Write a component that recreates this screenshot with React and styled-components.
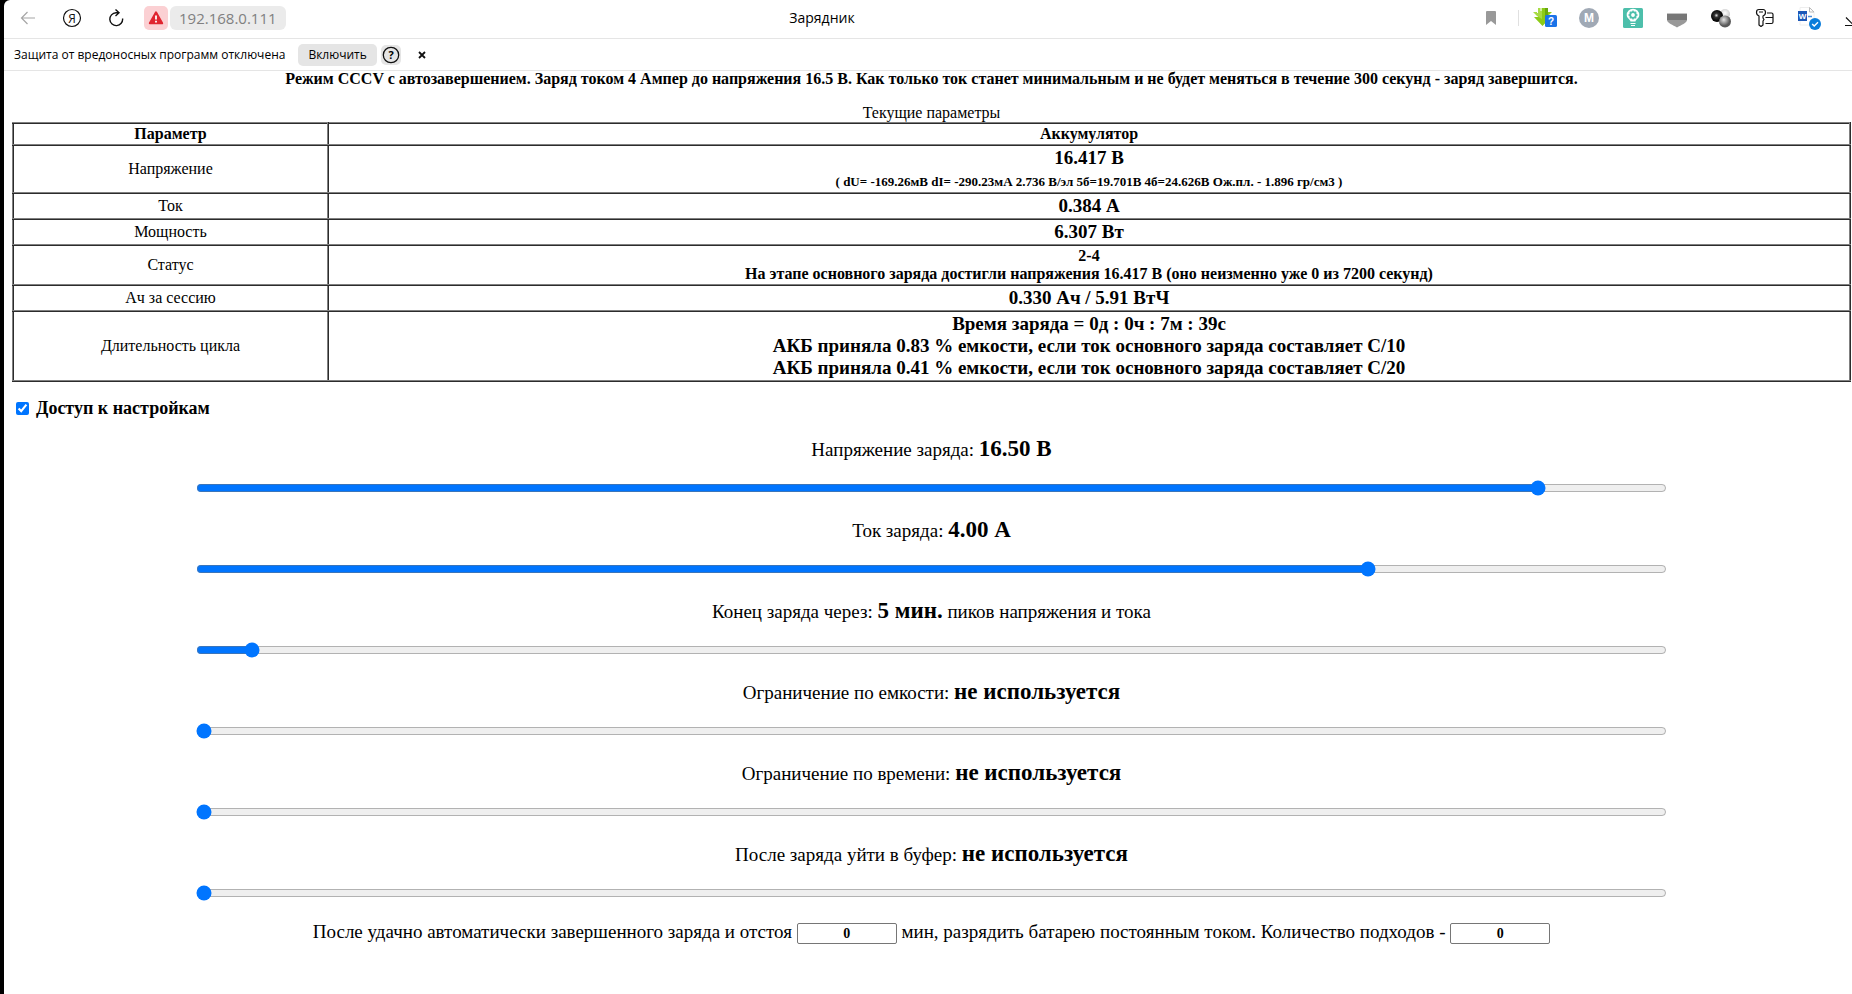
import React, { useState } from "react";
import styled, { createGlobalStyle } from "styled-components";

const GlobalStyle = createGlobalStyle`
  * {
    box-sizing: border-box;
  }

  body {
    margin: 0;
    background: #fff;
    color: #000;
    font-family: "Liberation Serif", "Times New Roman", serif;
    font-size: 16px;
    line-height: 18px;
    overflow-x: hidden;
  }
`;

const Window = styled.div`
  min-height: 100vh;
  padding-left: 4px;
  background: #000;
`;

const Browser = styled.div`
  min-height: 100vh;
  background: #fff;
  border-top-left-radius: 6px;
  overflow: hidden;
`;

const Toolbar = styled.header`
  display: grid;
  grid-template-columns: 1fr auto 1fr;
  align-items: center;
  height: 39px;
  padding-bottom: 2px;
  border-bottom: 1px solid #e5e5e5;
  font-family: "Open Sans", "Noto Sans", sans-serif;
`;

const NavGroup = styled.nav`
  display: flex;
  align-items: center;
  padding-left: 14px;
`;

const IconButton = styled.button`
  display: flex;
  align-items: center;
  justify-content: center;
  width: 20px;
  height: 20px;
  margin-right: ${({ $gap }) => $gap || 0}px;
  padding: 0;
  border: 0;
  background: none;

  svg {
    flex-shrink: 0;
  }
`;

const WarningButton = styled(IconButton)`
  width: 24px;
  height: 24px;
  margin-right: 2px;
  border-radius: 5px;
  background: #fbd0d3;
`;

const Address = styled.a`
  height: 24px;
  padding: 0 9px;
  border-radius: 6px;
  background: #ebebeb;
  color: #808080;
  font-size: 15px;
  line-height: 24px;
  text-decoration: none;
`;

const PageTitle = styled.div`
  padding-right: 212px;
  font-size: 14px;
  line-height: 20px;
`;

const Extensions = styled.div`
  display: flex;
  align-items: center;
  justify-content: flex-end;
  gap: 20px;
  margin-right: -15px;
`;

const Separator = styled.span`
  width: 1px;
  height: 16px;
  margin: 0 -4px 0 -3px;
  background: #e0e0e0;
`;

const Notice = styled.div`
  display: flex;
  align-items: center;
  height: 32px;
  padding-left: 10px;
  border-bottom: 1px solid #e5e5e5;
  font-family: "Open Sans", "Noto Sans", sans-serif;
  font-size: 12px;
`;

const EnableButton = styled.button`
  height: 22px;
  margin: 0 4px 0 13px;
  padding: 0 10px;
  border: 0;
  border-radius: 5px;
  background: #e5e5e5;
  font: inherit;
`;

const HelpButton = styled(IconButton)`
  border-radius: 5px;
  background: #e5e5e5;
`;

const Page = styled.main`
  padding: 0 1px 0 8px;
`;

const Mode = styled.h1`
  margin: 0 0 17px;
  font-size: 16px;
  font-weight: bold;
  line-height: 16px;
  text-align: center;
`;

const Table = styled.table`
  width: 100%;
  border-collapse: collapse;
  table-layout: fixed;
  text-align: center;

  th,
  td {
    padding: 1px;
    border: 2px inset gray;
  }

  th:first-child {
    width: 315px;
  }
`;

const Big = styled.div`
  font-size: 19px;
  font-weight: bold;
  line-height: 22px;
`;

const Small = styled.div`
  padding-top: 4px;
  font-size: 13px;
  font-weight: bold;
  line-height: 18px;
`;

const Access = styled.label`
  display: flex;
  align-items: center;
  gap: 7px;
  margin: 16px 0 17px 4px;
  font-size: 18px;
  font-weight: bold;
  line-height: 20px;

  input {
    width: 13px;
    height: 13px;
    margin: 0;
  }
`;

const Setting = styled.div`
  display: flex;
  flex-direction: column;
  align-items: center;
  height: 81px;
  font-size: 19px;

  label {
    line-height: 28px;
  }

  b {
    font-size: 23px;
  }
`;

const Slider = styled.input`
  width: 80%;
  height: 16px;
  margin: 16px 2px 0;
`;

const Discharge = styled.div`
  font-size: 19px;
  line-height: 22px;
  text-align: center;
`;

const NumberField = styled.input`
  width: 100px;
  height: 21px;
  padding: 0;
  border: 1px solid #767676;
  border-radius: 2px;
  font-family: inherit;
  font-size: 14px;
  font-weight: bold;
  text-align: center;
  vertical-align: middle;
`;

const ArrowLeft = () => (
  <svg width="16" height="14" viewBox="0 0 16 14" fill="none" stroke="#a6a6a6" strokeWidth="1.2">
    <path d="M15 7H1.5M7.5 1L1.5 7L7.5 13" />
  </svg>
);

const YandexIcon = () => (
  <svg width="20" height="20" viewBox="0 0 20 20">
    <circle cx="10" cy="10" r="8.5" fill="none" stroke="#111" strokeWidth="1.2" />
    <text
      x="10"
      y="14.5"
      textAnchor="middle"
      fontFamily="Open Sans, sans-serif"
      fontSize="12"
      fill="#111"
    >
      Я
    </text>
  </svg>
);

const Reload = () => (
  <svg width="18" height="18" viewBox="0 0 18 18" fill="none" stroke="#111" strokeWidth="1.4">
    <path d="M11.5 3.8H9A6.4 6.4 0 1 0 15.6 9.5M8.5 0.5L12 3.8L8.5 7" />
  </svg>
);

const Warning = () => (
  <svg width="16" height="16" viewBox="0 0 16 16">
    <path
      d="M8 2.3L14.2 13.3H1.8Z"
      fill="#e0242f"
      stroke="#e0242f"
      strokeWidth="2"
      strokeLinejoin="round"
    />
    <path d="M8 5.5V9.5M8 10.8V12.6" stroke="#fff" strokeWidth="1.8" />
  </svg>
);

const Help = () => (
  <svg width="18" height="18" viewBox="0 0 18 18">
    <circle cx="9" cy="9" r="7.7" fill="none" stroke="#111" strokeWidth="1.3" />
    <text
      x="9"
      y="13"
      textAnchor="middle"
      fontFamily="Open Sans, sans-serif"
      fontSize="11"
      fontWeight="bold"
    >
      ?
    </text>
  </svg>
);

const Close = () => (
  <svg width="8" height="8" viewBox="0 0 8 8" stroke="#111" strokeWidth="1.8">
    <path d="M1 1L7 7M7 1L1 7" />
  </svg>
);

const Bookmark = () => (
  <svg width="10" height="14" viewBox="0 0 10 14">
    <path d="M0 1Q0 0 1 0H9Q10 0 10 1V14L5 10L0 14Z" fill="#999" />
  </svg>
);

const Downloader = () => (
  <svg width="24" height="20" viewBox="0 0 24 20">
    <path d="M5 0H15V9H18L9.5 18L1 9H5Z" fill="#8ccb17" />
    <path d="M0 4H5V0H9V11L4 8Z" fill="#a8db45" />
    <path d="M12 0H15V8L12 13Z" fill="#68a80d" />
    <path d="M15 4H19L15 8Z" fill="#8ccb17" />
    <path d="M4.5 0V5M8 0V3" stroke="#fff" />
    <rect x="12" y="7" width="12" height="12" rx="1.5" fill="#1a73e8" />
    <text
      x="18"
      y="16.5"
      textAnchor="middle"
      fontFamily="Liberation Sans, sans-serif"
      fontSize="10"
      fontWeight="bold"
      fill="#fff"
    >
      ?
    </text>
  </svg>
);

const Mail = () => (
  <svg width="20" height="20" viewBox="0 0 20 20">
    <circle cx="10" cy="10" r="10" fill="#a0a9b5" />
    <text
      x="10"
      y="14"
      textAnchor="middle"
      fontFamily="Liberation Sans, sans-serif"
      fontSize="12"
      fontWeight="bold"
      fill="#fff"
    >
      M
    </text>
  </svg>
);

const Bulb = () => (
  <svg width="20" height="20" viewBox="0 0 20 20" fill="none" stroke="#fff">
    <rect width="20" height="20" rx="1.5" fill="#4dbfab" stroke="none" />
    <path
      d="M7.5 13.5C7.5 11.5 3.7 10.5 3.7 7A6.3 6.3 0 0 1 16.3 7C16.3 10.5 12.5 11.5 12.5 13.5Z"
      fill="#fff"
      stroke="none"
    />
    <circle cx="10" cy="7" r="2.8" stroke="#4dbfab" strokeWidth="1.8" />
    <path d="M10 2.5V4.5M10 9.5V11.5M5.5 7H7.5M12.5 7H14.5M6.8 3.8L8.3 5.3M13.2 3.8L11.7 5.3M6.8 10.2L8.3 8.7M13.2 10.2L11.7 8.7" stroke="#4dbfab" strokeWidth="1.3" />
    <path d="M7.5 15.5H12.5M8 17.5H12" strokeWidth="1.2" />
  </svg>
);

const Pocket = () => (
  <svg width="20" height="20" viewBox="0 0 20 20">
    <path d="M0 5H20V8H0Z" fill="#c4c4c4" />
    <path d="M0 6H20V12H0Z" fill="#777" />
    <path d="M0 12H20C20 15 14 17 10 19.5C6 17 0 15 0 12Z" fill="#999" />
  </svg>
);

const Spheres = () => (
  <svg width="20" height="20" viewBox="0 0 20 20">
    <defs>
      <radialGradient id="dark" cx="0.45" cy="0.45">
        <stop offset="0" stopColor="#ddd" />
        <stop offset="0.35" stopColor="#333" />
        <stop offset="1" stopColor="#000" />
      </radialGradient>
      <radialGradient id="gray" cx="0.4" cy="0.35">
        <stop offset="0" stopColor="#e6e6e6" />
        <stop offset="1" stopColor="#5a5a5a" />
      </radialGradient>
      <radialGradient id="pale" cx="0.5" cy="0.4">
        <stop offset="0" stopColor="#fff" />
        <stop offset="1" stopColor="#ccc" />
      </radialGradient>
    </defs>
    <circle cx="14" cy="6" r="5" fill="url(#pale)" />
    <circle cx="6" cy="8" r="6" fill="url(#dark)" />
    <circle cx="14" cy="13.5" r="6" fill="url(#gray)" />
  </svg>
);

const Passwords = () => (
  <svg
    width="20"
    height="20"
    viewBox="0 0 20 20"
    fill="none"
    stroke="#111"
    strokeWidth="1.2"
    strokeLinejoin="round"
  >
    <path d="M4 8Q1.5 7 1.5 4.5Q1.5 1.5 4 1.5H8Q10.5 1.5 10.5 4.5Q10.5 7 8 8V10L9 11.5L8 13V17L6 18.5L4 17ZM4 4H8" />
    <path d="M12 5H16.5Q18 5 18 6.5V14Q18 15.5 16.5 15.5H10.5M10.5 9.5H18" />
  </svg>
);

const WordFile = () => (
  <svg width="24" height="24" viewBox="0 0 24 24">
    <path d="M3 1.5H12L17 6V19H3Z" fill="#fff" stroke="#eee" />
    <path d="M12.5 1.5V6H17L12.5 1.5" fill="none" stroke="#bbb" />
    <path d="M11 10.5H15" stroke="#4a8cdb" strokeWidth="1.5" />
    <rect x="1" y="5" width="9" height="10" fill="#1d58b8" />
    <text
      x="5.5"
      y="13"
      textAnchor="middle"
      fontFamily="Liberation Sans, sans-serif"
      fontSize="8"
      fontWeight="bold"
      fill="#fff"
    >
      W
    </text>
    <circle cx="18" cy="18" r="6" fill="#0a7ddb" />
    <path d="M15.2 18L17.2 20L21 16.2" fill="none" stroke="#fff" strokeWidth="1.4" />
  </svg>
);

const Download = () => (
  <svg width="20" height="20" viewBox="0 0 20 20" fill="none" stroke="#111" strokeWidth="1.2">
    <path d="M10 2V16M3 9.5L10 16.5L17 9.5M2 17.5H18" />
  </svg>
);

const extensions = [
  ["Downloader", Downloader],
  ["Mail", Mail],
  ["Bulb", Bulb],
  ["Pocket", Pocket],
  ["Spheres", Spheres],
  ["Passwords", Passwords],
  ["WordFile", WordFile],
  ["Download", Download],
];

const rows = [
  {
    name: "Напряжение",
    value: (
      <>
        <Big>16.417 В</Big>
        <Small>
          ( dU= -169.26мВ dI= -290.23мА 2.736 В/эл 5б=19.701В 4б=24.626В Ож.пл. -
          1.896 гр/см3 )
        </Small>
      </>
    ),
  },
  { name: "Ток", value: <Big>0.384 А</Big> },
  { name: "Мощность", value: <Big>6.307 Вт</Big> },
  {
    name: "Статус",
    value: (
      <b>
        2-4
        <br />
        На этапе основного заряда достигли напряжения 16.417 В (оно неизменно уже
        0 из 7200 секунд)
      </b>
    ),
  },
  { name: "Ач за сессию", value: <Big>0.330 Ач / 5.91 ВтЧ</Big> },
  {
    name: "Длительность цикла",
    value: (
      <Big>
        Время заряда = 0д : 0ч : 7м : 39с
        <br />
        АКБ приняла 0.83 % емкости, если ток основного заряда составляет C/10
        <br />
        АКБ приняла 0.41 % емкости, если ток основного заряда составляет C/20
      </Big>
    ),
  },
];

const unused = (unit) => (v) => (v > 0 ? `${v} ${unit}` : "не используется");

const settings = [
  { id: "voltage", label: "Напряжение заряда:", max: 18, step: 0.05, start: 16.5, format: (v) => `${v.toFixed(2)} В` },
  { id: "current", label: "Ток заряда:", max: 5, step: 0.05, start: 4, format: (v) => `${v.toFixed(2)} А` },
  { id: "finish", label: "Конец заряда через:", after: " пиков напряжения и тока", max: 150, start: 5, format: (v) => `${v} мин.` },
  { id: "capacity", label: "Ограничение по емкости:", max: 200, start: 0, format: unused("Ач") },
  { id: "time", label: "Ограничение по времени:", max: 48, start: 0, format: unused("ч") },
  { id: "buffer", label: "После заряда уйти в буфер:", max: 15, start: 0, format: unused("В") },
];

const SettingRow = ({ id, label, after, max, step = 1, start, format }) => {
  const [value, setValue] = useState(start);

  return (
    <Setting>
      <label htmlFor={id}>
        {label} <b>{format(value)}</b>
        {after}
      </label>
      <Slider
        id={id}
        type="range"
        min="0"
        max={max}
        step={step}
        value={value}
        onChange={(e) => setValue(Number(e.target.value))}
      />
    </Setting>
  );
};

const App = () => {
  const [access, setAccess] = useState(true);

  return (
    <Window>
      <GlobalStyle />
      <Browser>
        <Toolbar>
          <NavGroup>
            <IconButton $gap={24}>
              <ArrowLeft />
            </IconButton>
            <IconButton $gap={24}>
              <YandexIcon />
            </IconButton>
            <IconButton $gap={18}>
              <Reload />
            </IconButton>
            <WarningButton>
              <Warning />
            </WarningButton>
            <Address href="#">192.168.0.111</Address>
          </NavGroup>
          <PageTitle>Зарядник</PageTitle>
          <Extensions>
            <IconButton>
              <Bookmark />
            </IconButton>
            <Separator />
            {extensions.map(([name, Icon]) => (
              <IconButton key={name} $gap={4}>
                <Icon />
              </IconButton>
            ))}
          </Extensions>
        </Toolbar>

        <Notice>
          Защита от вредоносных программ отключена
          <EnableButton>Включить</EnableButton>
          <HelpButton $gap={11}>
            <Help />
          </HelpButton>
          <IconButton>
            <Close />
          </IconButton>
        </Notice>

        <Page>
          <Mode>
            Режим CCCV с автозавершением. Заряд током 4 Ампер до напряжения 16.5
            В. Как только ток станет минимальным и не будет меняться в течение
            300 секунд - заряд завершится.
          </Mode>

          <Table>
            <caption>Текущие параметры</caption>
            <thead>
              <tr>
                <th>Параметр</th>
                <th>Аккумулятор</th>
              </tr>
            </thead>
            <tbody>
              {rows.map(({ name, value }) => (
                <tr key={name}>
                  <td>{name}</td>
                  <td>{value}</td>
                </tr>
              ))}
            </tbody>
          </Table>

          <Access>
            <input
              type="checkbox"
              checked={access}
              onChange={(e) => setAccess(e.target.checked)}
            />
            Доступ к настройкам
          </Access>

          {access && (
            <>
              {settings.map((item) => (
                <SettingRow key={item.id} {...item} />
              ))}
              <Discharge>
                <label htmlFor="rest">
                  После удачно автоматически завершенного заряда и отстоя
                </label>{" "}
                <NumberField id="rest" defaultValue="0" />{" "}
                <label htmlFor="repeats">
                  мин, разрядить батарею постоянным током. Количество подходов -
                </label>{" "}
                <NumberField id="repeats" defaultValue="0" />
              </Discharge>
            </>
          )}
        </Page>
      </Browser>
    </Window>
  );
};

export default App;
